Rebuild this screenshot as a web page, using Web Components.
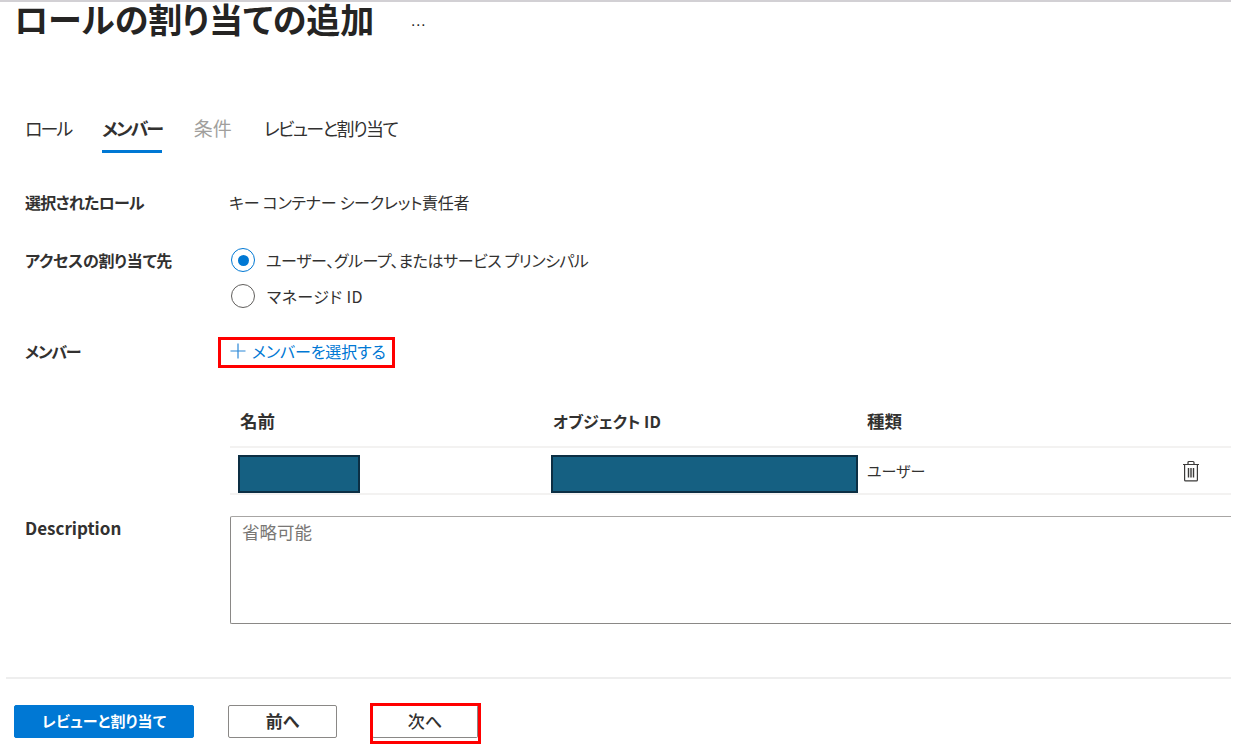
<!DOCTYPE html>
<html lang="ja">
<head>
<meta charset="utf-8">
<title>ロールの割り当ての追加</title>
<style>
    html, body { margin: 0; height: 100%; background: #fff; overflow: hidden; }
    body {
        font-family: "Noto Sans CJK JP", "Noto Sans", sans-serif;
        font-feature-settings: "palt";
        color: #323130;
    }
</style>
</head>
<body>

<role-page>
    <page-title>ロールの割り当ての追加</page-title>
    <role-tabs></role-tabs>
    <form-row label="選択されたロール" gap="34" style="--ls:-0.75px;--vs:-0.25px;--vx:-1px;">キー コンテナー シークレット責任者</form-row>
    <form-row label="アクセスの割り当て先" gap="25" style="--ls:-0.2px;">
        <radio-item checked style="letter-spacing:-0.42px;margin-top:-6px;">ユーザー、グループ、またはサービス プリンシパル</radio-item>
        <radio-item style="letter-spacing:0.4px;">マネージド ID</radio-item>
    </form-row>
    <form-row label="メンバー" gap="32" style="--ls:-1.2px;"><add-link>メンバーを選択する</add-link></form-row>
    <member-table></member-table>
    <form-row label="Description" gap="53" style="--lf:17px;"><desc-box>省略可能</desc-box></form-row>
    <page-footer></page-footer>
</role-page>

<script>
class RolePage extends HTMLElement {
    constructor() {
        super();
        this.attachShadow({ mode: 'open' });
        this.shadowRoot.innerHTML = `
            <style>
                :host {
                    display: flex;
                    flex-direction: column;
                    width: 1231px;
                    height: 744px;
                    box-sizing: border-box;
                    border-top: 2px solid #d2d0d4;
                    overflow: hidden;
                }
            </style>
            <slot></slot>
        `;
    }
}

class PageTitle extends HTMLElement {
    constructor() {
        super();
        this.attachShadow({ mode: 'open' });
        this.shadowRoot.innerHTML = `
            <style>
                :host {
                    display: flex;
                    align-items: center;
                    height: 38px;
                    padding-left: 14px;
                    font-family: "Liberation Sans", "Noto Sans CJK JP", sans-serif;
                    font-size: 34px;
                    font-weight: 700;
                    color: #252423;
                    line-height: 38px;
                }
                span {
                    margin-left: 36px;
                    font-size: 16px;
                    font-weight: 400;
                    letter-spacing: 1px;
                }
            </style>
            <slot></slot><span>…</span>
        `;
    }
}

class RoleTabs extends HTMLElement {
    constructor() {
        super();
        this.attachShadow({ mode: 'open' });
        this.shadowRoot.innerHTML = `
            <style>
                :host {
                    display: flex;
                    gap: 30px;
                    margin-top: 70px;
                    padding-left: 25px;
                    margin-bottom: 37px;
                    font-size: 18px;
                    letter-spacing: -2px;
                }
                div {
                    height: 43px;
                    box-sizing: border-box;
                    line-height: 36px;
                    border-bottom: 3px solid transparent;
                }
                .on { font-weight: 700; border-bottom-color: #0078d4; margin-left: 1px; }
                .off { color: #a19f9d; font-size: 19px; letter-spacing: 0; margin: 0 2px 0 2px; }
                .long { letter-spacing: -1.7px; }
            </style>
            <div>ロール</div>
            <div class="on">メンバー</div>
            <div class="off">条件</div>
            <div class="long">レビューと割り当て</div>
        `;
    }
}

class FormRow extends HTMLElement {
    constructor() {
        super();
        this.attachShadow({ mode: 'open' });
        this.shadowRoot.innerHTML = `
            <style>
                :host {
                    display: grid;
                    grid-template-columns: 205px 1fr;
                    padding-left: 25px;
                    font-size: 16px;
                    line-height: 24px;
                }
                .label {
                    font-weight: 700;
                    font-size: var(--lf, 16px);
                    letter-spacing: var(--ls, 0);
                }
                .value { letter-spacing: var(--vs, 0); margin-left: var(--vx, 0); }
            </style>
            <div class="label"></div>
            <div class="value"><slot></slot></div>
        `;
    }

    connectedCallback() {
        this.shadowRoot.querySelector('.label').textContent = this.getAttribute('label');
        this.style.marginBottom = this.getAttribute('gap') + 'px';
    }
}

class RadioItem extends HTMLElement {
    constructor() {
        super();
        this.attachShadow({ mode: 'open' });
        this.shadowRoot.innerHTML = `
            <style>
                :host {
                    display: flex;
                    align-items: center;
                    gap: 12px;
                    height: 36px;
                    padding-left: 1px;
                }
                :host([checked]) { gap: 11px; }
                i {
                    box-sizing: border-box;
                    display: flex;
                    align-items: center;
                    justify-content: center;
                    width: 24px;
                    height: 24px;
                    border: 1.5px solid #605e5c;
                    border-radius: 50%;
                }
                :host([checked]) i { border-color: #0078d4; }
                :host([checked]) i::after {
                    content: "";
                    width: 11px;
                    height: 11px;
                    border-radius: 50%;
                    background: #0078d4;
                }
            </style>
            <i></i><span><slot></slot></span>
        `;
    }
}

class AddLink extends HTMLElement {
    constructor() {
        super();
        this.attachShadow({ mode: 'open' });
        this.shadowRoot.innerHTML = `
            <style>
                :host {
                    display: inline-flex;
                    align-items: center;
                    gap: 6px;
                    box-sizing: border-box;
                    height: 31px;
                    margin: -2px 0 0 -12px;
                    padding: 0 6px 3px 9px;
                    border: 3px solid #f00;
                    color: #0078d4;
                    letter-spacing: -0.1px;
                }
                svg { width: 16px; height: 16px; }
            </style>
            <svg viewBox="0 0 16 16" fill="none" stroke="#2b88d8" stroke-width="1.2"><path d="M8 .5v15M.5 8h15"/></svg>
            <slot></slot>
        `;
    }
}

class MemberTable extends HTMLElement {
    constructor() {
        super();
        this.attachShadow({ mode: 'open' });
        this.shadowRoot.innerHTML = `
            <style>
                :host {
                    display: block;
                    margin: -1px 0 21px 230px;
                    font-size: 16px;
                }
                .head, .body {
                    display: grid;
                    grid-template-columns: 313px 314px 1fr 49px;
                    align-items: center;
                    box-sizing: border-box;
                    padding-left: 10px;
                }
                .head {
                    height: 49px;
                    padding-bottom: 4px;
                    border-bottom: 2px solid #f3f2f1;
                    font-weight: 700;
                }
                .head .kanji { font-size: 17.5px; }
                .body { height: 47px; border-bottom: 2px solid #f3f2f1; font-size: 15px; }
                .mask {
                    box-sizing: border-box;
                    height: 38px;
                    margin: 7px 0 0 -2px;
                    background: #156082;
                    border: 2px solid #0c2f44;
                }
                .name { width: 122px; }
                .oid { width: 307px; margin-left: -2px; }
                svg { width: 18px; height: 22px; display: block; }
            </style>
            <div class="head"><div class="kanji">名前</div><div>オブジェクト ID</div><div class="kanji">種類</div><div></div></div>
            <div class="body">
                <div class="mask name"></div>
                <div class="mask oid"></div>
                <div>ユーザー</div>
                <svg viewBox="0 0 18 22" fill="none" stroke="#3b3a39" stroke-width="1.2">
                    <path d="M1 4.500h16M6 4.500V2.500a1 1 0 0 1 1-1h4a1 1 0 0 1 1 1v2M2.600 4.500v15.400a1 1 0 0 0 1 1h10.800a1 1 0 0 0 1-1V4.500"/>
                    <path d="M6.500 8v9.500M9 8v9.500M11.500 8v9.500" stroke-width="1.400"/>
                </svg>
            </div>
        `;
    }
}

class DescBox extends HTMLElement {
    constructor() {
        super();
        this.attachShadow({ mode: 'open' });
        this.shadowRoot.innerHTML = `
            <style>
                :host {
                    display: block;
                    box-sizing: border-box;
                    height: 108px;
                    padding: 3px 11px;
                    border: 1px solid #8a8886;
                    border-top-color: #a8a6a4;
                    border-right: 0;
                    border-radius: 2px 0 0 2px;
                    color: #797775;
                    font-size: 17.5px;
                    letter-spacing: 0;
                }
            </style>
            <slot></slot>
        `;
    }
}

class PageFooter extends HTMLElement {
    constructor() {
        super();
        this.attachShadow({ mode: 'open' });
        this.shadowRoot.innerHTML = `
            <style>
                :host {
                    display: flex;
                    gap: 34px;
                    margin-left: 6px;
                    padding: 26px 0 0 8px;
                    border-top: 2px solid #eeeeee;
                    font-size: 17px;
                    font-weight: 700;
                }
                button {
                    box-sizing: border-box;
                    height: 33px;
                    padding: 0 0 3px;
                    font: inherit;
                    font-feature-settings: inherit;
                    color: #323130;
                    background: #fff;
                    border: 1px solid #8a8886;
                    border-radius: 2px;
                }
                .primary { width: 180px; font-size: 15px; letter-spacing: 0.2px; color: #fff; background: #0078d4; border-color: #0078d4; }
                .prev { width: 109px; }
                .next { width: 106px; margin-left: 1px; border-top-color: transparent; font-weight: 500; }
                .mark {
                    position: relative;
                }
                .mark::after {
                    content: "";
                    position: absolute;
                    left: -3px;
                    top: -3px;
                    width: 111px;
                    height: 41px;
                    box-sizing: border-box;
                    border: 3px solid #f00;
                }
            </style>
            <button class="primary">レビューと割り当て</button>
            <button class="prev">前へ</button>
            <button class="next mark">次へ</button>
        `;
    }
}

customElements.define('role-page', RolePage);
customElements.define('page-title', PageTitle);
customElements.define('role-tabs', RoleTabs);
customElements.define('form-row', FormRow);
customElements.define('radio-item', RadioItem);
customElements.define('add-link', AddLink);
customElements.define('member-table', MemberTable);
customElements.define('desc-box', DescBox);
customElements.define('page-footer', PageFooter);
</script>
</body>
</html>
